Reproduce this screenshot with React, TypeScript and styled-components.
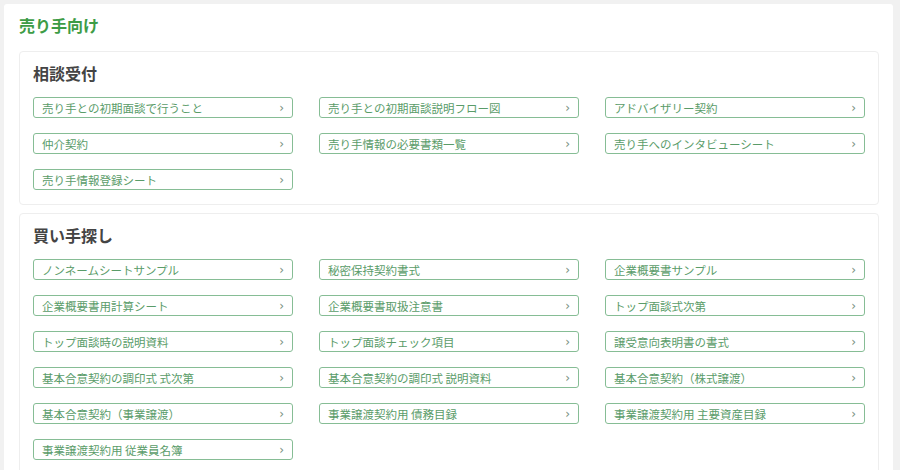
import React from 'react';
import styled, { createGlobalStyle } from 'styled-components';

const GlobalStyle = createGlobalStyle`
  html, body {
    margin: 0;
    padding: 0;
    background: #f1f1f1;
    font-family: "Noto Sans CJK JP", "Noto Sans", sans-serif;
  }
`;

const Page = styled.div`
  padding: 4px 7px 0 4px;
  height: 470px;
  box-sizing: border-box;
  overflow: hidden;
`;

const Panel = styled.div`
  background: #fff;
  border-radius: 3px;
  padding: 10px 14px 20px 15px;
  min-height: 470px;
  box-sizing: border-box;
`;

const Title = styled.h1`
  margin: 0 0 15px 0;
  font-size: 16px;
  line-height: 22px;
  font-weight: bold;
  color: #3d9c46;
`;

const Card = styled.section`
  border: 1px solid #eeeeee;
  border-radius: 4px;
  padding: 10px 13px 14px 13px;
  margin-bottom: 8px;
`;

const Heading = styled.h2`
  margin: 0 0 13px 0;
  font-size: 16px;
  line-height: 22px;
  font-weight: bold;
  color: #444;
`;

const Grid = styled.div`
  display: grid;
  grid-template-columns: repeat(3, 260px);
  column-gap: 26px;
  row-gap: 15px;
`;

const LinkButton = styled.a`
  display: flex;
  align-items: center;
  justify-content: space-between;
  height: 21px;
  box-sizing: border-box;
  padding: 0 8px 0 8px;
  border: 1px solid #86bd95;
  border-radius: 3px;
  color: #5a9c69;
  font-size: 11.5px;
  text-decoration: none;
  white-space: nowrap;
  & span.arrow {
    color: #778f7e;
    font-size: 12px;
    font-family: "DejaVu Sans", sans-serif;
  }
`;

const sections = [
  {
    title: '相談受付',
    items: [
      '売り手との初期面談で行うこと',
      '売り手との初期面談説明フロー図',
      'アドバイザリー契約',
      '仲介契約',
      '売り手情報の必要書類一覧',
      '売り手へのインタビューシート',
      '売り手情報登録シート',
    ],
  },
  {
    title: '買い手探し',
    items: [
      'ノンネームシートサンプル',
      '秘密保持契約書式',
      '企業概要書サンプル',
      '企業概要書用計算シート',
      '企業概要書取扱注意書',
      'トップ面談式次第',
      'トップ面談時の説明資料',
      'トップ面談チェック項目',
      '譲受意向表明書の書式',
      '基本合意契約の調印式 式次第',
      '基本合意契約の調印式 説明資料',
      '基本合意契約（株式譲渡）',
      '基本合意契約（事業譲渡）',
      '事業譲渡契約用 債務目録',
      '事業譲渡契約用 主要資産目録',
      '事業譲渡契約用 従業員名簿',
    ],
  },
];

function App() {
  return (
    <>
      <GlobalStyle />
      <Page>
        <Panel>
          <Title>売り手向け</Title>
          {sections.map((s) => (
            <Card key={s.title}>
              <Heading>{s.title}</Heading>
              <Grid>
                {s.items.map((item) => (
                  <LinkButton key={item} href="#">
                    <span>{item}</span>
                    <span className="arrow">›</span>
                  </LinkButton>
                ))}
              </Grid>
            </Card>
          ))}
        </Panel>
      </Page>
    </>
  );
}

export default App;
